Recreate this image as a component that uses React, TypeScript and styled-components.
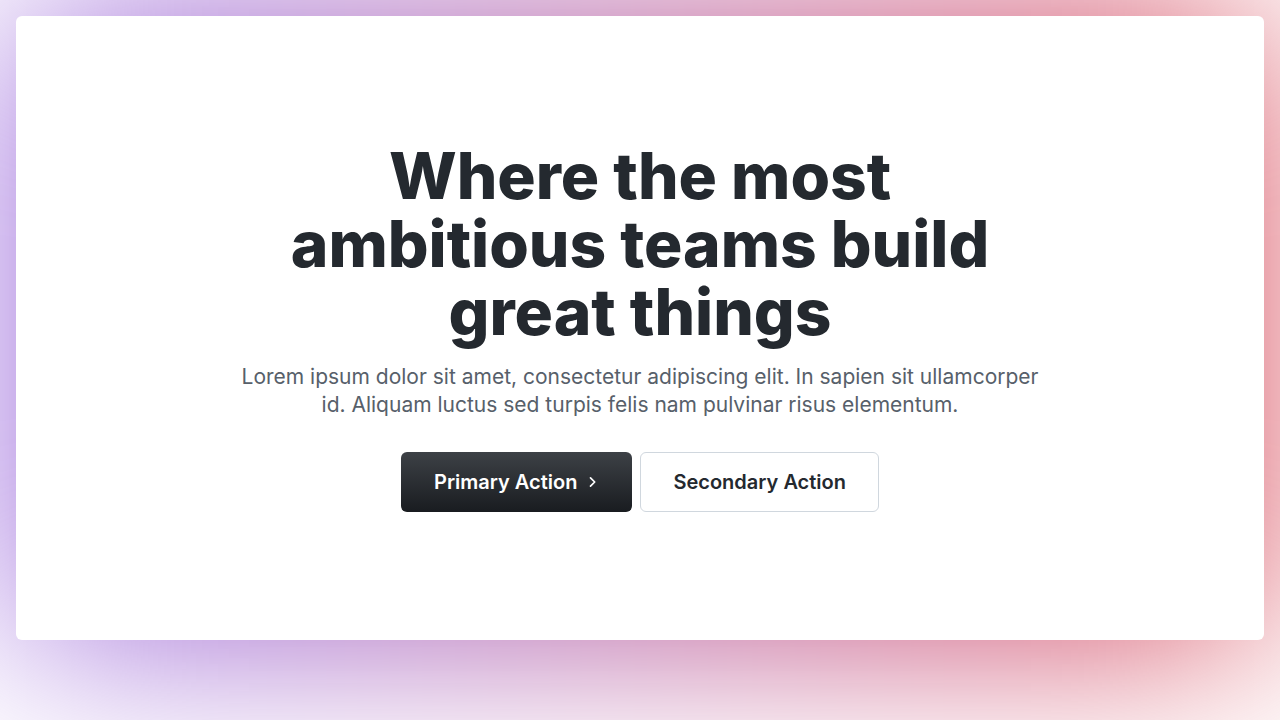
import React from "react";
import styled, { createGlobalStyle, css } from "styled-components";

const GlobalStyle = createGlobalStyle`
  *, *::before, *::after { box-sizing: border-box; }
  body {
    margin: 0;
    background: #ffffff;
    font-family: Inter, "Liberation Sans", sans-serif;
    color: #24292f;
  }
`;

const Page = styled.main`
  min-height: 100vh;
  padding: 16px;
  overflow: hidden;
`;

const Stage = styled.div`
  position: relative;
  isolation: isolate;

  &::before {
    content: "";
    position: absolute;
    inset: 0;
    z-index: -1;
    background: linear-gradient(90deg, #9a6be0 0%, #9b61cd 18%, #b3559a 50%, #cb4367 80%, #dc5058 100%);
    filter: blur(96px);
  }
`;

const Card = styled.section`
  display: flex;
  flex-direction: column;
  align-items: center;
  padding: 126px 24px 128px;
  border-radius: 6px;
  background: #ffffff;
  text-align: center;
`;

const Title = styled.h1`
  max-width: 800px;
  margin: 0 0 17px;
  font-size: 64px;
  font-weight: 800;
  line-height: 68px;
`;

const Description = styled.p`
  max-width: 800px;
  margin: 0 0 33px;
  color: #57606a;
  font-size: 21px;
  font-weight: 400;
  line-height: 28px;
`;

const Actions = styled.div`
  display: flex;
  flex-wrap: wrap;
  justify-content: center;
  gap: 8px;
`;

const ActionLink = styled.a<{ $primary?: boolean }>`
  display: inline-flex;
  align-items: center;
  justify-content: center;
  gap: 8px;
  height: 60px;
  padding: 0 32px;
  border: 1px solid transparent;
  border-radius: 6px;
  font-size: 20px;
  font-weight: 600;
  line-height: 28px;
  text-decoration: none;
  ${({ $primary }) =>
    $primary
      ? css`
          background: linear-gradient(180deg, #3d4146 0%, #191c20 100%) border-box;
          color: #ffffff;
        `
      : css`
          border-color: #d0d7de;
          color: #24292f;
        `}
`;

const Chevron = () => (
  <svg width="14" height="14" viewBox="0 0 14 14" fill="none" aria-hidden="true">
    <path d="M5.5 2.8 9.7 7 5.5 11.2" stroke="currentColor" strokeWidth="1.7" strokeLinecap="round" strokeLinejoin="round" />
  </svg>
);

export default function App() {
  return (
    <>
      <GlobalStyle />
      <Page>
        <Stage>
          <Card>
            <Title>Where the most ambitious teams build great things</Title>
            <Description>
              Lorem ipsum dolor sit amet, consectetur adipiscing elit. In sapien sit ullamcorper id. Aliquam luctus sed
              turpis felis nam pulvinar risus elementum.
            </Description>
            <Actions>
              <ActionLink href="#primary" $primary>
                Primary Action
                <Chevron />
              </ActionLink>
              <ActionLink href="#secondary">Secondary Action</ActionLink>
            </Actions>
          </Card>
        </Stage>
      </Page>
    </>
  );
}
